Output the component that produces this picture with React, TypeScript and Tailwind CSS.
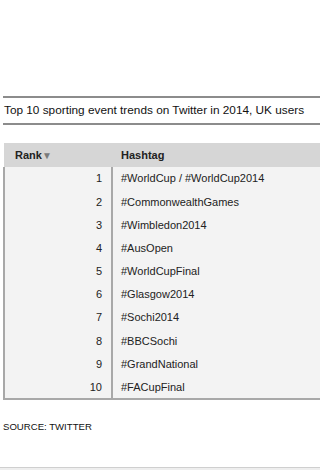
const trends = [
  "#WorldCup / #WorldCup2014",
  "#CommonwealthGames",
  "#Wimbledon2014",
  "#AusOpen",
  "#WorldCupFinal",
  "#Glasgow2014",
  "#Sochi2014",
  "#BBCSochi",
  "#GrandNational",
  "#FACupFinal",
];

export default function App() {
  return (
    <div
      className="w-[320px] h-[470px] overflow-hidden bg-white text-[#222]"
      style={{ fontFamily: '"Liberation Sans", Arial, sans-serif' }}
    >
      <div className="pl-[3px] pt-[96px]">
        <div className="border-y-2 border-[#8c8c8c] h-[29px] flex items-center pl-[1px]">
          <span className="text-[11.8px] leading-none text-[#111] whitespace-nowrap">
            Top 10 sporting event trends on Twitter in 2014, UK users
          </span>
        </div>

        <table className="mt-[18px] w-full border-collapse text-[11px]">
          <thead>
            <tr className="bg-[#d6d6d6] h-[24px]">
              <th className="w-[108px] text-left font-bold pl-[11px] text-[11px]">
                Rank<span className="text-[#7a7a7a] text-[10px]">▼</span>
              </th>
              <th className="text-left font-bold pl-[9px] text-[11px]">Hashtag</th>
            </tr>
          </thead>
          <tbody className="bg-[#f3f3f3] border-l-2 border-b-2 border-[#a8a8a8]">
            {trends.map((t, i) => (
              <tr key={t} className="h-[23.2px]">
                <td className="text-right pr-[9px] border-r-2 border-[#a8a8a8]">{i + 1}</td>
                <td className="pl-[8px]">{t}</td>
              </tr>
            ))}
          </tbody>
        </table>

        <p className="mt-[20px] text-[9.6px] leading-[14px] text-[#111]">SOURCE: TWITTER</p>
      </div>
      <div className="mt-[33px] h-[4px] border-t border-[#cfcfcf] bg-[#eeeeee]" />
    </div>
  );
}
